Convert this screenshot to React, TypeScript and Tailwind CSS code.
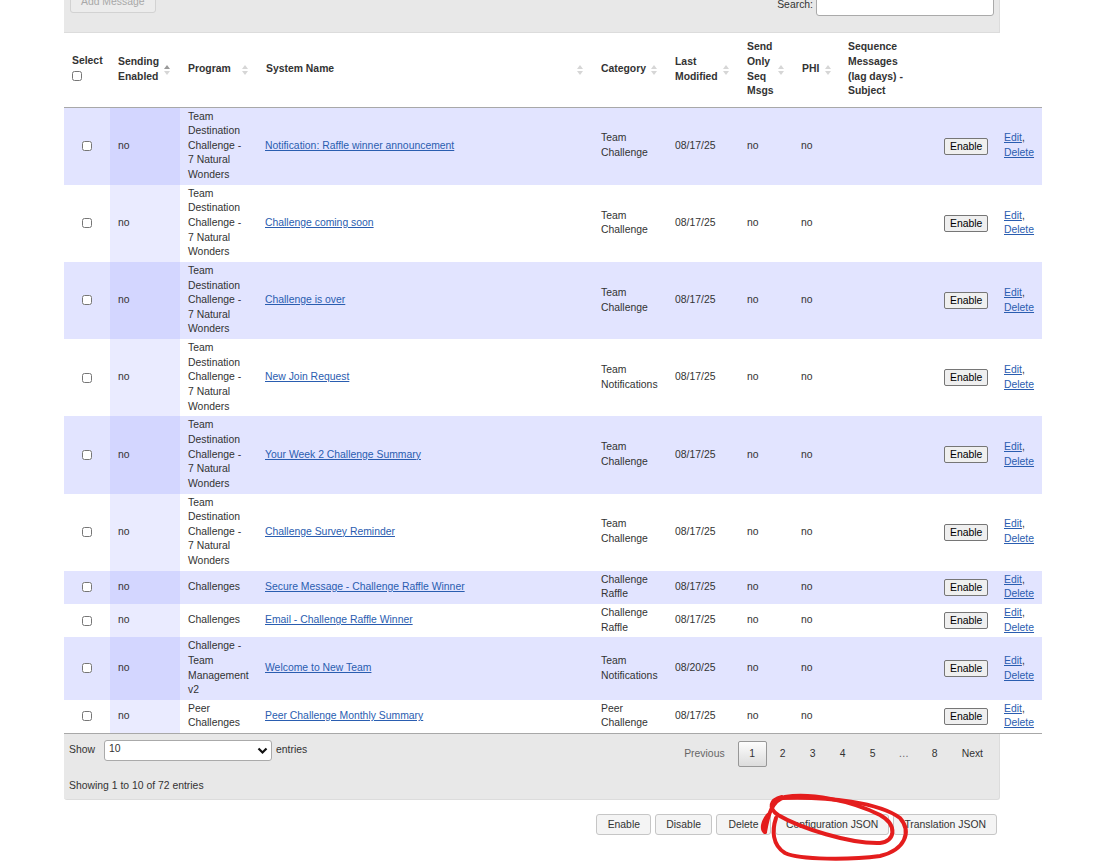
import React from "react";

interface Row {
  program: string;
  name: string;
  category: string;
  modified: string;
}

const TDC = "Team\nDestination\nChallenge -\n7 Natural\nWonders";

const rows: Row[] = [
  { program: TDC, name: "Notification: Raffle winner announcement", category: "Team\nChallenge", modified: "08/17/25" },
  { program: TDC, name: "Challenge coming soon", category: "Team\nChallenge", modified: "08/17/25" },
  { program: TDC, name: "Challenge is over", category: "Team\nChallenge", modified: "08/17/25" },
  { program: TDC, name: "New Join Request", category: "Team\nNotifications", modified: "08/17/25" },
  { program: TDC, name: "Your Week 2 Challenge Summary", category: "Team\nChallenge", modified: "08/17/25" },
  { program: TDC, name: "Challenge Survey Reminder", category: "Team\nChallenge", modified: "08/17/25" },
  { program: "Challenges", name: "Secure Message - Challenge Raffle Winner", category: "Challenge\nRaffle", modified: "08/17/25" },
  { program: "Challenges", name: "Email - Challenge Raffle Winner", category: "Challenge\nRaffle", modified: "08/17/25" },
  { program: "Challenge -\nTeam\nManagement\nv2", name: "Welcome to New Team", category: "Team\nNotifications", modified: "08/20/25" },
  { program: "Peer\nChallenges", name: "Peer Challenge Monthly Summary", category: "Peer\nChallenge", modified: "08/17/25" },
];

function SortIcon({ active }: { active?: boolean }) {
  return (
    <svg width="6" height="12" viewBox="0 0 6 12" className="absolute right-[10px] top-1/2 -translate-y-1/2">
      <path d="M0 5 L3 1 L6 5 Z" fill={active ? "#9a9a9a" : "#d6d6d6"} />
      <path d="M0 7 L3 11 L6 7 Z" fill="#d6d6d6" />
    </svg>
  );
}

function Th({ children, sort, active }: { children: React.ReactNode; sort?: boolean; active?: boolean }) {
  return (
    <th className="relative h-[74px] pl-[8px] pr-[18px] text-left align-middle font-bold whitespace-pre-line">
      {children}
      {sort && <SortIcon active={active} />}
    </th>
  );
}

function Btn({ children }: { children: React.ReactNode }) {
  return (
    <button className="h-[21px] min-w-[55px] px-[10px] border border-[#c6c6c6] rounded-[3px] bg-[#f4f4f4] text-[#333] text-[10.4px] leading-[13px]">
      {children}
    </button>
  );
}

export default function App() {
  return (
    <div className="relative flow-root min-h-[863px] bg-white text-[#333] text-[10.4px] leading-[14.64px]" style={{ fontFamily: '"Liberation Sans", Arial, sans-serif' }}>
      <div className="pl-[64px]">
        {/* top toolbar, scrolled partly out of view */}
        <div className="-mt-[14px] w-[936px] h-[47px] bg-[#e8e8e8] border-b border-r border-[#dcdcdc] flex justify-between items-start pl-[6px] pr-[5px] pt-[6px]">
          <button className="h-[21px] px-[10px] border border-[#d2d2d2] rounded-[3px] bg-[#ececec] text-[#a8a8a8] text-[10.4px]">
            Add Message
          </button>
          <div className="flex items-center gap-[3px] mt-[3px]">
            <span>Search:</span>
            <div className="w-[178px] h-[21px] bg-white border border-[#aaa] rounded-[3px]" />
          </div>
        </div>

        <table className="table-fixed border-collapse w-[978px]">
          <colgroup>
            <col className="w-[46px]" />
            <col className="w-[70px]" />
            <col className="w-[78px]" />
            <col className="w-[335px]" />
            <col className="w-[74px]" />
            <col className="w-[72px]" />
            <col className="w-[55px]" />
            <col className="w-[47px]" />
            <col className="w-[95px]" />
            <col className="w-[60px]" />
            <col className="w-[46px]" />
          </colgroup>
          <thead>
            <tr className="border-b border-[#a8a8a8]">
              <th className="h-[74px] pl-[8px] text-left align-middle font-bold">
                <div className="-mt-[4px]">Select</div>
                <input type="checkbox" className="w-[10px] h-[10px] m-0 mt-[2px] block" />
              </th>
              <Th sort active>{"Sending\nEnabled"}</Th>
              <Th sort>Program</Th>
              <Th sort>System Name</Th>
              <Th sort>Category</Th>
              <Th sort>{"Last\nModified"}</Th>
              <Th sort>{"Send\nOnly\nSeq\nMsgs"}</Th>
              <Th sort>PHI</Th>
              <th className="pl-[7px] pr-[4px] text-left align-middle font-bold whitespace-pre-line">
                {"Sequence\nMessages\n(lag days) -\nSubject"}
              </th>
              <th />
              <th />
            </tr>
          </thead>
          <tbody className="border-b border-[#a8a8a8]">
            {rows.map((r, i) => {
              const odd = i % 2 === 0;
              return (
                <tr key={i} className={odd ? "bg-[#e2e4ff]" : "bg-white"}>
                  <td className="py-[2px] text-center align-middle">
                    <input type="checkbox" className="w-[10px] h-[10px] m-0 align-middle" />
                  </td>
                  <td className={`py-[2px] pl-[8px] align-middle ${odd ? "bg-[#d3d6ff]" : "bg-[#eaebff]"}`}>no</td>
                  <td className="py-[2px] pl-[8px] align-middle whitespace-pre-line">{r.program}</td>
                  <td className="py-[2px] pl-[7px] align-middle">
                    <a href="#" className="text-[#2a5db0] underline">{r.name}</a>
                  </td>
                  <td className="py-[2px] pl-[8px] align-middle whitespace-pre-line">{r.category}</td>
                  <td className="py-[2px] pl-[8px] align-middle">{r.modified}</td>
                  <td className="py-[2px] pl-[8px] align-middle">no</td>
                  <td className="py-[2px] pl-[7px] align-middle">no</td>
                  <td className="py-[2px]" />
                  <td className="py-[2px] pl-[8px] align-middle">
                    <button className="h-[17px] px-[5px] border border-[#767676] rounded-[2px] bg-[#efefef] text-black text-[10.4px] leading-[13px]">
                      Enable
                    </button>
                  </td>
                  <td className="py-[2px] pl-[8px] align-middle">
                    <a href="#" className="text-[#2a5db0] underline">Edit</a>,
                    <br />
                    <a href="#" className="text-[#2a5db0] underline">Delete</a>
                  </td>
                </tr>
              );
            })}
          </tbody>
        </table>

        {/* footer: length + info + pagination */}
        <div className="w-[936px] h-[66px] bg-[#e8e8e8] border-b border-r border-[#dcdcdc] rounded-b-[3px] flex justify-between pl-[5px] pr-[5px] pt-[6px]">
          <div>
            <div className="flex items-center h-[21px]">
              <span>Show</span>
              <div className="ml-[9px] w-[168px] h-[21px] bg-white border border-[#aaa] rounded-[3px] flex items-center justify-between pl-[4px] pr-[3px]">
                <span className="-mt-[3px]">10</span>
                <svg width="11" height="8" viewBox="0 0 11 8">
                  <path d="M1.5 1.5 L5.5 5.5 L9.5 1.5" stroke="#111" strokeWidth="2.2" fill="none" />
                </svg>
              </div>
              <span className="ml-[4px]">entries</span>
            </div>
            <div className="mt-[18px]">Showing 1 to 10 of 72 entries</div>
          </div>
          <div className="flex items-start pt-[1px]">
            <span className="h-[26px] px-[11px] ml-[2px] flex items-center text-[#666]">Previous</span>
            <span className="h-[26px] w-[29px] ml-[2px] flex items-center justify-center border border-[#979797] rounded-[2px] bg-gradient-to-b from-[#fdfdfd] to-[#dcdcdc] text-[#333]">1</span>
            {["2", "3", "4", "5"].map((n) => (
              <span key={n} className="h-[26px] w-[28px] ml-[2px] flex items-center justify-center text-[#333]">{n}</span>
            ))}
            <span className="h-[26px] w-[30px] ml-[2px] flex items-center justify-center text-[#666]">…</span>
            <span className="h-[26px] w-[28px] ml-[2px] flex items-center justify-center text-[#333]">8</span>
            <span className="h-[26px] px-[11px] ml-[2px] flex items-center text-[#333]">Next</span>
          </div>
        </div>

        {/* bulk actions */}
        <div className="w-[936px] flex justify-end gap-[4px] pr-[3px] mt-[14px]">
          <Btn>Enable</Btn>
          <Btn>Disable</Btn>
          <Btn>Delete</Btn>
          <Btn>Configuration JSON</Btn>
          <Btn>Translation JSON</Btn>
        </div>
      </div>

      {/* red hand-drawn annotation */}
      <svg width="165" height="82" viewBox="0 0 165 82" className="absolute left-[755px] top-[785px] pointer-events-none">
        <g stroke="#e41d1d" strokeWidth="4" fill="none" strokeLinecap="round" strokeLinejoin="round">
          <path d="M10 47 C13 30, 17 15, 30 12 C55 8, 95 15, 125 30 C143 40, 140 57, 125 58 C95 59, 45 43, 23 30 C13 23, 15 15, 27 12" />
          <path d="M25 13 C75 11, 125 18, 145 33 C157 47, 150 65, 125 71 C95 75, 45 75, 30 68 C17 60, 17 45, 21 33" />
          <path d="M10 47 C6 44, 8 36, 13 30" />
        </g>
      </svg>
    </div>
  );
}
